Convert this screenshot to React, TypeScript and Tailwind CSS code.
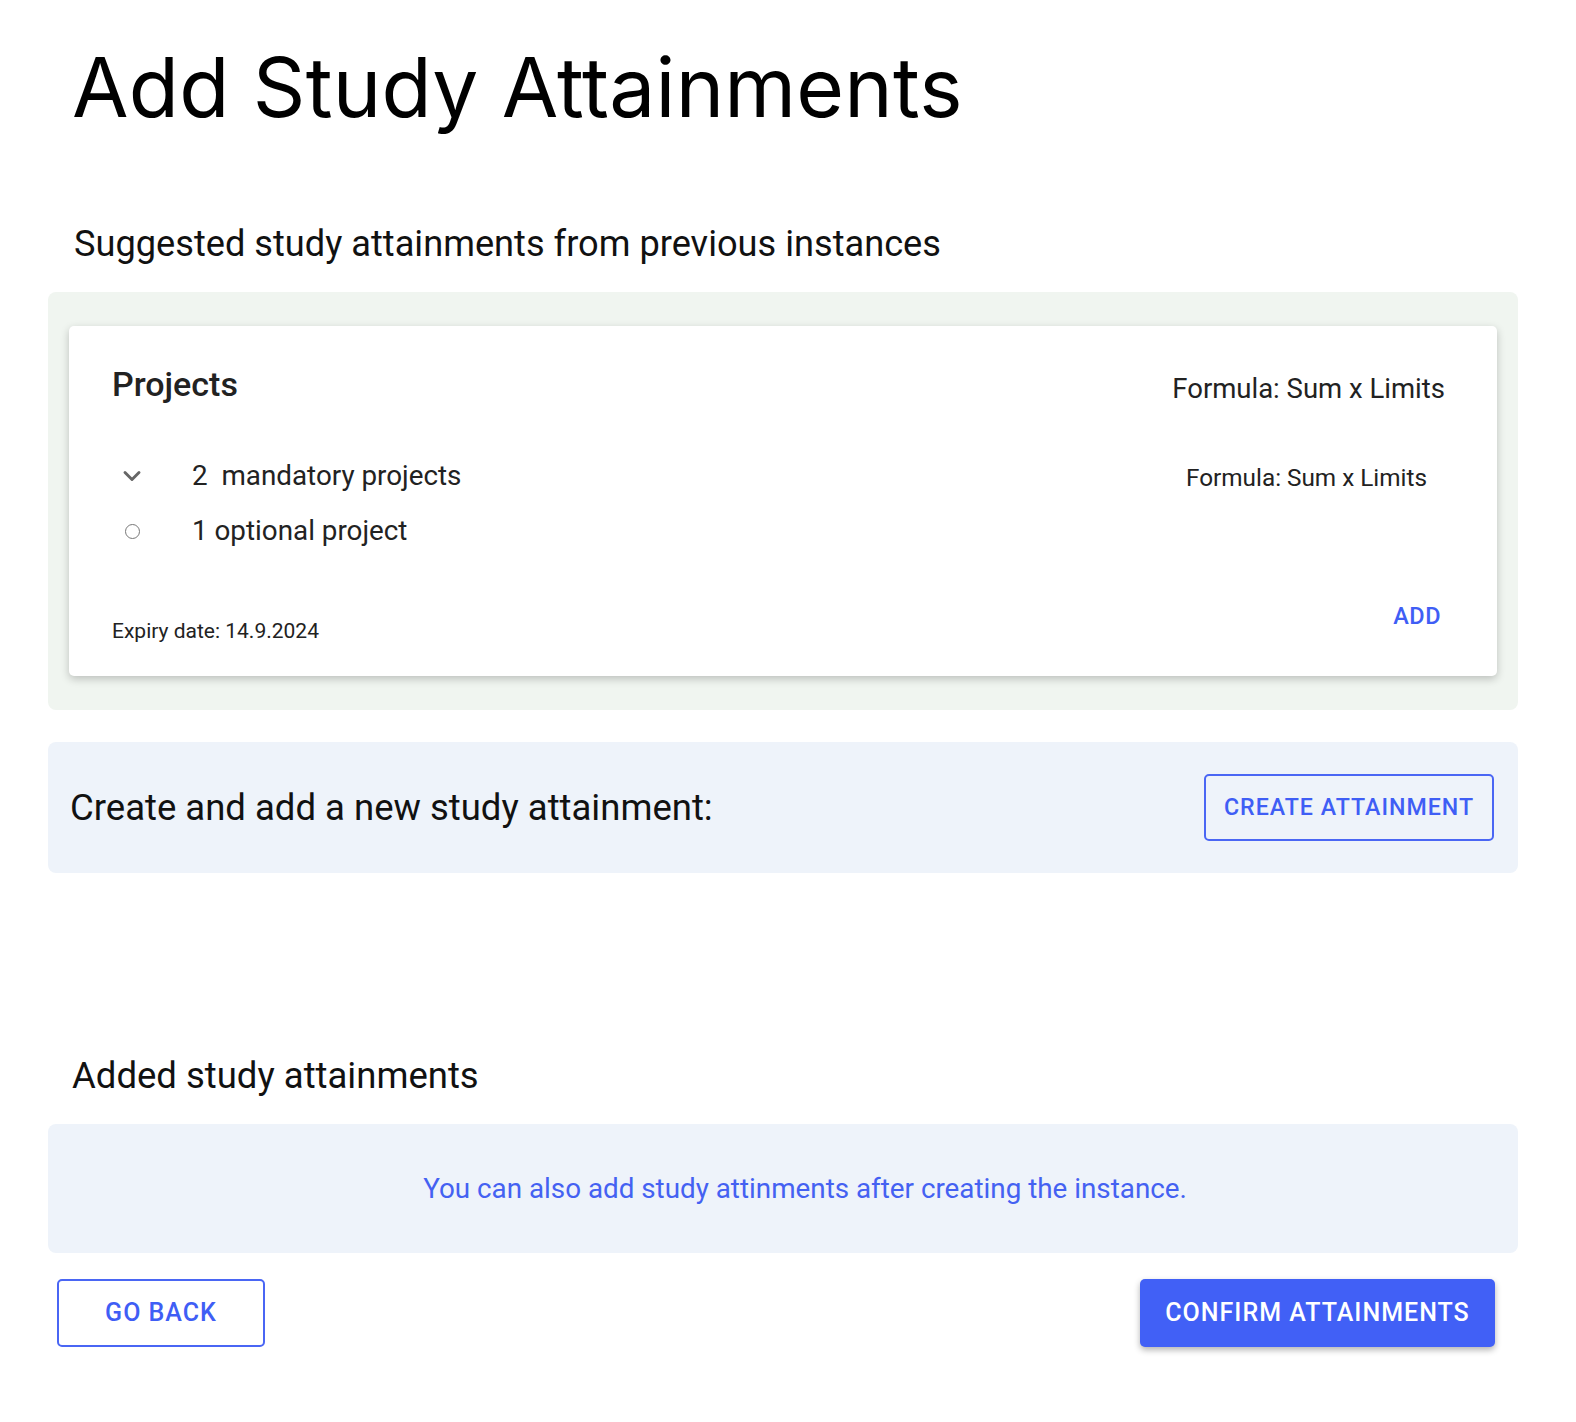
import { ChevronDown } from 'lucide-react'

export default function App() {
  return (
    <div className="min-h-screen bg-white text-black font-['Roboto','Liberation_Sans',sans-serif]">
      <div className="ml-[48px] w-[1470px] pt-[38px]">
        <h1 className="pl-[24px] font-['Inter',sans-serif] text-[82px] leading-[100px] font-normal tracking-[0.2px]">
          Add Study Attainments
        </h1>

        <h2 className="mt-[86px] pl-[26px] text-[36.2px] leading-[40px] text-[#111]">
          Suggested study attainments from previous instances
        </h2>

        <section className="mt-[28px] rounded-lg bg-[#f0f5f0] px-[21px] py-[34px]">
          <div className="rounded-[5px] bg-white px-[43px] pt-[38px] pb-[32px] shadow-[0_3px_8px_rgba(0,0,0,0.22)]">
            <div className="flex items-start justify-between">
              <div className="text-[34px] leading-[40px] font-medium text-[#222]">Projects</div>
              <div className="mt-[7px] mr-[9px] text-[27.5px] leading-[36px] text-[#222]">Formula: Sum x Limits</div>
            </div>

            <div className="mt-[52px] flex items-start justify-between">
              <div className="flex h-[34px] items-center">
                <ChevronDown size={28} strokeWidth={2.5} className="ml-[6px] text-[#666]" />
                <span className="ml-[46px] text-[27.8px] leading-[34px] text-[#222]">
                  2&nbsp;&nbsp;mandatory projects
                </span>
              </div>
              <div className="mt-[5px] mr-[27px] text-[24.3px] leading-[28px] text-[#222]">Formula: Sum x Limits</div>
            </div>

            <div className="mt-[21px] flex items-center">
              <span className="ml-[13px] h-[15px] w-[15px] rounded-full border-[1.5px] border-[#777]" />
              <span className="ml-[52px] text-[27.8px] leading-[34px] text-[#222]">1 optional project</span>
            </div>

            <div className="mt-[53px] flex items-end justify-between">
              <div className="text-[21px] leading-[26px] text-[#222]">Expiry date: 14.9.2024</div>
              <button className="mb-[13px] mr-[13px] text-[23.5px] leading-[30px] font-medium tracking-[0.5px] text-[#3f5ef5]">
                ADD
              </button>
            </div>
          </div>
        </section>

        <section className="mt-[32px] flex items-center justify-between rounded-lg bg-[#eef3fa] pl-[22px] pr-[24px] py-[32px]">
          <div className="text-[36.5px] leading-[40px] text-[#111]">
            Create and add a new study attainment:
          </div>
          <button className="h-[67px] w-[290px] rounded-[5px] border-2 border-[#4a66f4] text-[23.2px] font-medium tracking-[1px] text-[#3f5ef5]">
            CREATE ATTAINMENT
          </button>
        </section>

        <h2 className="mt-[183px] pl-[24px] text-[36.5px] leading-[40px] text-[#111]">Added study attainments</h2>

        <section className="mt-[28px] flex h-[129px] items-center justify-center rounded-lg bg-[#eef3fa] pl-[44px]">
          <p className="text-[27.8px] leading-[34px] text-[#4461f2]">
            You can also add study attinments after creating the instance.
          </p>
        </section>

        <div className="mt-[26px] flex items-center justify-between pl-[9px] pr-[23px]">
          <button className="h-[68px] w-[208px] rounded-[5px] border-2 border-[#4a66f4] text-[25px] font-medium tracking-[1px] text-[#3f5ef5]">
            GO BACK
          </button>
          <button className="h-[68px] w-[355px] rounded-[5px] bg-[#4160f6] text-[25px] font-medium tracking-[1px] text-white shadow-[0_3px_6px_rgba(0,0,0,0.3)]">
            CONFIRM ATTAINMENTS
          </button>
        </div>
      </div>
    </div>
  )
}
